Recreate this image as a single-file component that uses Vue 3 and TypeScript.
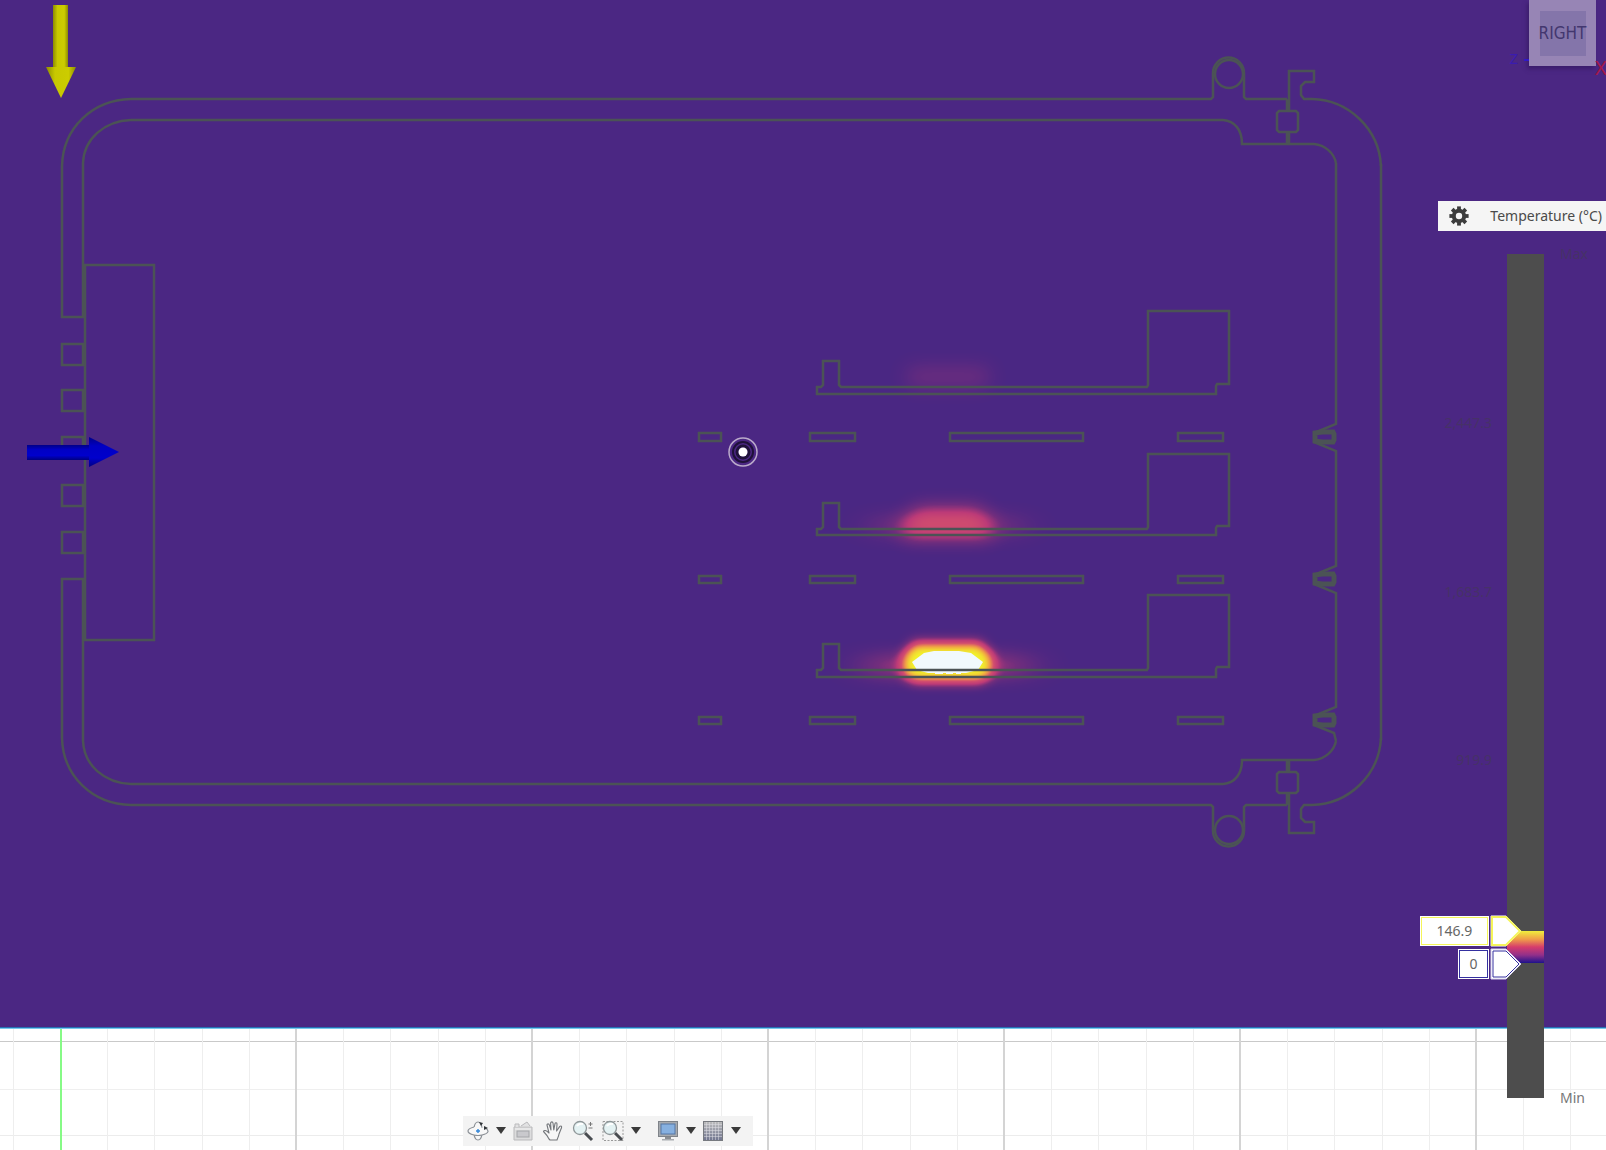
<script setup lang="ts">
import { ref } from 'vue'

interface Board { top: number; socket: number; depth: number }
interface Tick { label: string; at: number }

const low = ref('0')
const high = ref('146.9')

const boards: Board[] = [
  { top: 387, socket: 311, depth: 7 },
  { top: 529, socket: 454, depth: 6 },
  { top: 670, socket: 595, depth: 7 },
]
const ventRows = [
  { y: 433, h: 8 },
  { y: 576, h: 7 },
  { y: 717, h: 7 },
]
const clips = [437, 579, 720]
const vents = [[699, 22], [810, 45], [950, 133], [1178, 45]]
const grille = [344, 390, 437, 485, 532]

const ticks: Tick[] = [
  { label: '2,447.3', at: 20 },
  { label: '1,683.7', at: 40 },
  { label: '919.9', at: 60 },
]

const gridColumns = Array.from({ length: 34 }, (_, i) => ({
  x: Math.round(60 + (i - 1) * 47.2),
  major: i > 1 && (i - 1) % 5 === 0,
  axis: i === 1,
}))

const boardPath = ({ top, socket, depth }: Board) =>
  `M817 ${top} H821 L823 ${top - 2} V${top - 26} H839 V${top - 2} L841 ${top} H1147 L1148 ${top - 2} ` +
  `V${socket} H1229 V${top - 3} H1217 L1216 ${top - 1} V${top + depth} H817 Z`

const shell = (ventEdge: number) =>
  `M85 ${ventEdge} H62 V166 C63 128 92 100 131 99 H1211 L1213 97 V73 A15 15 0 0 1 1244 73 V97 L1246 99 H1287 ` +
  `M83 ${ventEdge} V163 C84 139 104 121 131 120 H1223 C1235 121 1242 130 1242 144 H1314 C1325 145 1334 153 1336 163 ` +
  'M1289 111 V71 H1314 V82 H1305 L1301 86 V95 L1304 99 H1312 C1349 100 1379 129 1381 166 ' +
  'M1279 111 H1296 L1298 113 V130 L1296 132 H1279 L1277 130 V113 Z ' +
  'M1287 99 V111 M1287 132 V144 M1289 132 V144'
</script>

<template>
  <main class="viewport">
    <svg class="scene" viewBox="0 0 1606 1150" preserveAspectRatio="xMinYMin slice" aria-label="Thermal section view">
      <defs>
        <filter id="thermal" filterUnits="userSpaceOnUse" x="780" y="330" width="340" height="390" color-interpolation-filters="sRGB">
          <feComponentTransfer>
            <feFuncR type="table" tableValues="0.294 0.45 0.74 0.83 0.94 0.95" />
            <feFuncG type="table" tableValues="0.153 0.18 0.23 0.31 0.62 0.96" />
            <feFuncB type="table" tableValues="0.514 0.49 0.47 0.43 0.28 0.16" />
          </feComponentTransfer>
        </filter>
        <filter id="soft6" x="-50%" y="-80%" width="200%" height="260%" color-interpolation-filters="sRGB"><feGaussianBlur stdDeviation="6" /></filter>
        <filter id="soft9" x="-50%" y="-120%" width="200%" height="340%" color-interpolation-filters="sRGB"><feGaussianBlur stdDeviation="10 9" /></filter>
        <filter id="softWide" x="-50%" y="-300%" width="200%" height="700%" color-interpolation-filters="sRGB"><feGaussianBlur stdDeviation="22 8" /></filter>
        <linearGradient id="yellowShaft"><stop offset="0" stop-color="#8e8c00" /><stop offset=".3" stop-color="#c8c800" /><stop offset=".75" stop-color="#cccc00" /><stop offset="1" stop-color="#8e8c00" /></linearGradient>
        <linearGradient id="blueShaft" x2="0" y2="1"><stop offset="0" stop-color="#000088" /><stop offset=".3" stop-color="#0000c4" /><stop offset=".7" stop-color="#0000cc" /><stop offset="1" stop-color="#000080" /></linearGradient>
      </defs>

      <rect width="1606" height="1028" fill="#4b2783" />
      <rect y="1028" width="1606" height="122" fill="#fff" />

      <g filter="url(#thermal)">
        <rect x="780" y="330" width="340" height="390" fill="#000" />
        <rect x="908" y="367" width="80" height="20" fill="#fff" opacity=".17" filter="url(#soft9)" />
        <rect x="880" y="516" width="134" height="20" fill="#fff" opacity=".26" filter="url(#softWide)" />
        <path d="M904 538 V520 L918 507 H978 L991 520 V538 Z" fill="#fff" opacity=".48" filter="url(#soft9)" />
        <rect x="870" y="655" width="154" height="22" fill="#fff" opacity=".36" filter="url(#softWide)" />
        <path d="M902 674 V655 L914 642 H980 L993 655 V674 L981 682 H914 Z" fill="#fff" filter="url(#soft6)" />
      </g>
      <path d="M912 662 L924 653 L934 651 H959 L971 653 L983 662 L978 670 L966 673 H928 L917 670 Z" fill="#f1f9fd" />
      <path d="M935 673 h8 m3 0 h7 m3 0 h5" stroke="#f1f9fd" stroke-width="2" fill="none" />

      <g class="outline">
        <path :d="shell(317)" />
        <path :d="shell(325)" transform="translate(0 904) scale(1 -1)" />
        <circle cx="1229" cy="74" r="14" />
        <circle cx="1229" cy="830" r="14" />
        <path d="M1381 164 V740 M1336 163 V424 L1314 433 M1314 442 L1336 451 V566 L1314 575 M1314 584 L1336 593 V707 L1314 716 M1314 725 L1334 733 L1336 741" />
        <rect x="85" y="265" width="69" height="375" />
        <rect v-for="y in grille" :key="y" x="62" :y="y" width="21" height="21" />
        <path v-for="b in boards" :key="b.top" :d="boardPath(b)" />
        <template v-for="row in ventRows" :key="row.y">
          <rect v-for="[x, w] in vents" :key="x" :x="x" :y="row.y" :width="w" :height="row.h" />
        </template>
        <path v-for="y in clips" :key="y" class="clip" :d="`M1315 ${y - 4} L1322 ${y - 5} H1333 L1334 ${y - 3} V${y + 3} L1333 ${y + 5} H1322 L1315 ${y + 4} Z`" />
      </g>

      <g shape-rendering="crispEdges">
        <rect y="1041" width="1606" height="1" fill="#c9c9c9" />
        <rect y="1089" width="1606" height="1" fill="#efefef" />
        <rect y="1135" width="1606" height="1" fill="#ececec" />
        <rect v-for="c in gridColumns" :key="c.x" :x="c.x - (c.major ? 1 : 0)" y="1028" :width="c.major || c.axis ? 2 : 1" height="122" :fill="c.axis ? '#86fa86' : c.major ? '#d4d4d4' : '#eeeeee'" />
        <rect y="1027" width="1606" height="1" fill="#2772b5" />
        <rect y="1028" width="1606" height="1" fill="#78c8ec" />
      </g>

      <path d="M53 5 H68 V67 H53 Z" fill="url(#yellowShaft)" />
      <path d="M46 67 H76 L61 98 Z" fill="url(#yellowShaft)" />
      <path d="M27 445 H90 V460 H27 Z" fill="url(#blueShaft)" />
      <path d="M89 437 L119 452 L89 467 Z" fill="url(#blueShaft)" />

      <g fill="none">
        <circle cx="743" cy="452" r="14" stroke="#baaaca" stroke-width="1.5" />
        <circle cx="743" cy="452" r="10" stroke="#1f1139" stroke-width="2" />
        <circle cx="743" cy="452" r="6" stroke="#20123b" stroke-width="3" />
        <circle cx="743" cy="452" r="4.5" fill="#fff" />
      </g>
    </svg>

    <div class="cube">
      <span class="axis-z">Z</span>
      <span class="dash"></span>
      <button class="face" type="button"><span>RIGHT</span></button>
      <span class="axis-x">X</span>
    </div>

    <section class="legend" aria-label="Temperature legend">
      <header class="legend-head">
        <button type="button" class="gear" aria-label="Legend settings">
          <svg viewBox="-10 -10 20 20" width="20" height="20">
            <circle r="5.2" fill="none" stroke="#3c3c3c" stroke-width="4" />
            <rect v-for="a in 8" :key="a" x="-1.9" y="-9.6" width="3.8" height="4" fill="#3c3c3c" :transform="`rotate(${a * 45})`" />
          </svg>
        </button>
        <h1>Temperature (°C)</h1>
      </header>
      <div class="scale">
        <div class="ticks">
          <span v-for="t in ticks" :key="t.label" class="tick" :style="{ top: t.at + '%' }">{{ t.label }}</span>
        </div>
        <div class="bar"><div class="range"></div></div>
        <div class="ends"><span>Max</span><span class="min">Min</span></div>
        <div class="handle high">
          <input v-model="high" aria-label="Upper limit" />
          <svg width="32" height="32" viewBox="0 0 32 32"><path d="M1 1 H16 L31 16 L16 31 H1 Z" fill="#fff" stroke="#fff" stroke-width="1" /><path d="M2 2 H16 L30 16 L16 30 H2 Z" fill="#fff" stroke="#f5f55a" stroke-width="2" /></svg>
        </div>
        <div class="handle low">
          <input v-model="low" aria-label="Lower limit" />
          <svg width="32" height="32" viewBox="0 0 32 32"><path d="M1 1 H16 L31 16 L16 31 H1 Z" fill="#fff" stroke="#d9d6ef" stroke-width="1" /><path d="M3 3 H16 L29 16 L16 29 H3 Z" fill="#fff" stroke="#3430a0" stroke-width="1" /></svg>
        </div>
      </div>
    </section>

    <nav class="toolbar" aria-label="Navigation">
      <button type="button" aria-label="Orbit">
        <svg viewBox="0 0 22 22"><g fill="#f8f8f8" stroke="#8b9096" stroke-width="1.2"><path d="M7 14 C8 22 14 22 15 14 M7 8 C8 0 14 0 15 8" /><path d="M7 7 C-1 9 -1 13 7 15 C9 15.5 13 15.5 15 15 C23 13 22 10 18 8" /></g><path d="M12 2 l4 1 -2 3z M17 6 l4 2 -4 2z" fill="#303438" /><path d="M11 9 v4 M9 11 h4" stroke="#3386d8" stroke-width="1.4" /></svg>
      </button>
      <button type="button" class="caret" aria-label="Orbit options"><svg viewBox="0 0 10 8"><path d="M0 0 H10 L5 7 Z" /></svg></button>
      <button type="button" aria-label="Look at">
        <svg viewBox="0 0 22 22"><path d="M2 7 H20 V20 H2 Z" fill="#dcdcdd" stroke="#b9b9bb" /><path d="M3 7 V4 H7 V7 M9 6 L15 2 L18 6" fill="#e2e2e3" stroke="#b9b9bb" /><rect x="5" y="11" width="12" height="6" fill="#c9c9cd" stroke="#a4a5a9" /><path d="M3 9 H19" stroke="#f2f2f2" /></svg>
      </button>
      <button type="button" aria-label="Pan">
        <svg viewBox="0 0 22 22"><path d="M7 19 C5 15 3 13 1.5 11.5 C2 10 4 10 7 13 L5 5 C5 3.5 7 3.5 7.4 5 L9 10 L8.6 3 C9 1.5 10.8 1.5 11 3 L11.8 10 L13 3.6 C13.4 2.3 15 2.7 15 4 L14.6 11 L17.8 6.4 C19 5.5 20 6.5 19.5 7.7 L17 14 C16.5 17 15.5 18 15 20 H8 Z" fill="#f7f7f7" stroke="#74777b" stroke-width="1.1" stroke-linejoin="round" /></svg>
      </button>
      <button type="button" aria-label="Zoom">
        <svg viewBox="0 0 22 22"><path d="M13 13 L20 20" stroke="#484c50" stroke-width="3" /><circle cx="8" cy="8" r="6.5" fill="#e4f2f3" stroke="#8e9698" stroke-width="1.3" /><path d="M5 6 Q7 3 11 4" stroke="#fff" stroke-width="2" fill="none" /><path d="M16.5 4 h4 M18.5 2 v4 M16.5 8 h4" stroke="#777" /></svg>
      </button>
      <button type="button" aria-label="Zoom window">
        <svg viewBox="0 0 22 22"><rect x="1" y="1.5" width="20" height="19" fill="none" stroke="#999" stroke-dasharray="2 1.5" /><path d="M13 13 L20 20" stroke="#484c50" stroke-width="3" /><circle cx="8" cy="8" r="6.5" fill="#e4f2f3" stroke="#8e9698" stroke-width="1.3" /><path d="M5 6 Q7 3 11 4" stroke="#fff" stroke-width="2" fill="none" /></svg>
      </button>
      <button type="button" class="caret" aria-label="Zoom options"><svg viewBox="0 0 10 8"><path d="M0 0 H10 L5 7 Z" /></svg></button>
      <button type="button" class="spaced" aria-label="Display settings">
        <svg viewBox="0 0 22 22"><path d="M8 16 H14 V19 H8 Z" fill="#8b8e93" /><path d="M5 19 H17 V20.5 H5 Z" fill="#a9acb0" /><rect x="1.5" y="1.5" width="19" height="15" fill="#a6aaaf" stroke="#7f8389" /><rect x="4" y="4" width="14" height="10" fill="#86b0e0" stroke="#5577a6" /></svg>
      </button>
      <button type="button" class="caret" aria-label="Display options"><svg viewBox="0 0 10 8"><path d="M0 0 H10 L5 7 Z" /></svg></button>
      <button type="button" aria-label="Grid and snaps">
        <svg viewBox="0 0 22 22"><defs><linearGradient id="sheet" x2="0" y2="1"><stop offset="0" stop-color="#bdbdbd" /><stop offset="1" stop-color="#70758f" /></linearGradient></defs><rect x="1.5" y="1.5" width="19" height="19" fill="url(#sheet)" stroke="#777a80" /><path d="M4.5 2 V20 M7.5 2 V20 M10.5 2 V20 M13.5 2 V20 M16.5 2 V20 M2 4.5 H20 M2 7.5 H20 M2 10.5 H20 M2 13.5 H20 M2 16.5 H20" stroke="#e0e0e6" stroke-width=".5" /></svg>
      </button>
      <button type="button" class="caret" aria-label="Grid options"><svg viewBox="0 0 10 8"><path d="M0 0 H10 L5 7 Z" /></svg></button>
    </nav>
  </main>
</template>

<style>
body { margin: 0; }
</style>

<style scoped>
.viewport { position: relative; height: 100vh; overflow: hidden; background: #fff; font-family: "Noto Sans", sans-serif; font-size: 14px; line-height: 20px; }
.scene { position: absolute; inset: 0; width: 100%; height: 100%; }
.outline { fill: none; stroke: #4b5355; stroke-width: 2.5; }
.outline .clip { stroke-width: 5; }
button { border: 0; padding: 0; background: none; color: inherit; font: inherit; }

.cube { position: absolute; top: 0; right: 0; display: flex; align-items: flex-start; height: 80px; }
.face { display: flex; align-items: center; justify-content: center; box-sizing: border-box; width: 67px; height: 66px; background: #9785b5; box-shadow: -2px 3px 4px #3b1d6c; }
.face span { display: flex; align-items: center; justify-content: center; width: 46px; height: 45px; background: #8475aa; color: #43376f; font-family: "DejaVu Sans Condensed", "DejaVu Sans", sans-serif; font-size: 17px; }
.axis-z { margin: 48px 6px 0 0; color: #3a1cb0; font-size: 15px; }
.dash { position: relative; z-index: 1; width: 5px; height: 2px; margin-top: 59px; background: #3018c8; }
.axis-x { width: 10px; margin-top: 58px; color: #a51848; font-size: 20px; text-indent: -1px; }

.legend { position: absolute; top: 201px; right: 0; bottom: 52px; display: flex; flex-direction: column; align-items: flex-end; gap: 23px; }
.legend-head { display: flex; align-items: center; gap: 21px; height: 30px; padding: 0 4px 0 11px; background: #f5f5f5; color: #4a4a4a; }
.legend-head h1 { margin: 0; font-size: 14px; font-weight: 400; }
.gear { height: 20px; }
.gear svg { display: block; }
.scale { position: relative; flex: 1; display: flex; color: #463267; }
.ticks { position: relative; width: 60px; margin-right: 15px; }
.tick { position: absolute; right: 0; transform: translateY(-50%); }
.bar { position: relative; width: 37px; margin-right: 16px; background: #4d4d4d; }
.range { position: absolute; left: 0; right: 0; top: 80.2%; bottom: 16%; background: linear-gradient(#f0ee3c, #f0a048 25%, #d63c6c 50%, #92308a 75%, #1e128c); }
.ends { display: flex; flex-direction: column; justify-content: space-between; width: 46px; }
.ends span { position: relative; top: -10px; }
.ends .min { top: 10px; color: #777; }
.handle { position: absolute; right: 84px; display: flex; align-items: center; gap: 1px; transform: translateY(-50%); }
.handle svg { display: block; }
.handle input { box-sizing: border-box; height: 30px; padding: 0; background: #fff; color: #666; font: inherit; text-align: center; border-radius: 0; }
.high { top: 80.2%; }
.high input { width: 69px; border: 2px solid #f5f55a; outline: 1px solid #fff; outline-offset: -1px; }
.low { top: 84.1%; }
.low input { width: 31px; border: 2px solid #3430a0; outline: 1px solid #fff; outline-offset: -1px; }

.toolbar { position: absolute; left: 463px; bottom: 4px; display: flex; align-items: center; gap: 8px; height: 30px; padding: 0 14px 0 4px; background: #f3f3f3; }
.toolbar button { display: flex; width: 22px; height: 22px; align-items: center; justify-content: center; }
.toolbar button svg { width: 22px; height: 22px; }
.toolbar .caret { width: 10px; margin: 0 -2px 0 -1px; }
.toolbar .caret svg { width: 10px; height: 8px; fill: #3a3a3a; }
.toolbar .spaced { margin-left: 10px; }
</style>
